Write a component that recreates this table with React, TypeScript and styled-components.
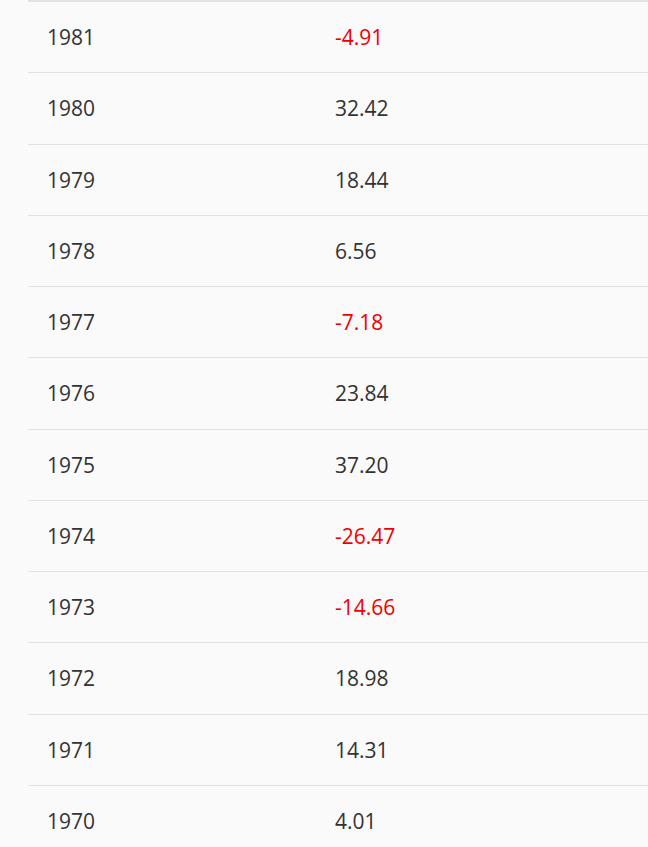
import React from "react";
import styled, { createGlobalStyle } from "styled-components";

const Global = createGlobalStyle`
  html, body {
    margin: 0;
    padding: 0;
    background: #fafafa;
  }
  body {
    font-family: "Segoe UI", "Open Sans", "Noto Sans", sans-serif;
    overflow: hidden;
  }
`;

const Page = styled.div`
  padding-left: 28px;
  background: #fafafa;
  min-height: 847px;
`;

const Table = styled.div`
  border-top: 2px solid #e2e2e2;
  display: flex;
  flex-direction: column;
`;

const Row = styled.div`
  box-sizing: border-box;
  height: 71.25px;
  display: grid;
  grid-template-columns: 288px 1fr;
  align-items: center;
  border-bottom: 1px solid #e2e2e2;
`;

const Cell = styled.div<{ $negative?: boolean }>`
  padding-left: 19px;
  font-size: 21px;
  line-height: 28px;
  color: ${(p) => (p.$negative ? "#ef0000" : "#333333")};
`;

const data: [string, string][] = [
  ["1981", "-4.91"],
  ["1980", "32.42"],
  ["1979", "18.44"],
  ["1978", "6.56"],
  ["1977", "-7.18"],
  ["1976", "23.84"],
  ["1975", "37.20"],
  ["1974", "-26.47"],
  ["1973", "-14.66"],
  ["1972", "18.98"],
  ["1971", "14.31"],
  ["1970", "4.01"],
];

export default function App() {
  return (
    <Page>
      <Global />
      <Table>
        {data.map(([year, value]) => (
          <Row key={year}>
            <Cell>{year}</Cell>
            <Cell $negative={value.startsWith("-")}>{value}</Cell>
          </Row>
        ))}
      </Table>
    </Page>
  );
}
